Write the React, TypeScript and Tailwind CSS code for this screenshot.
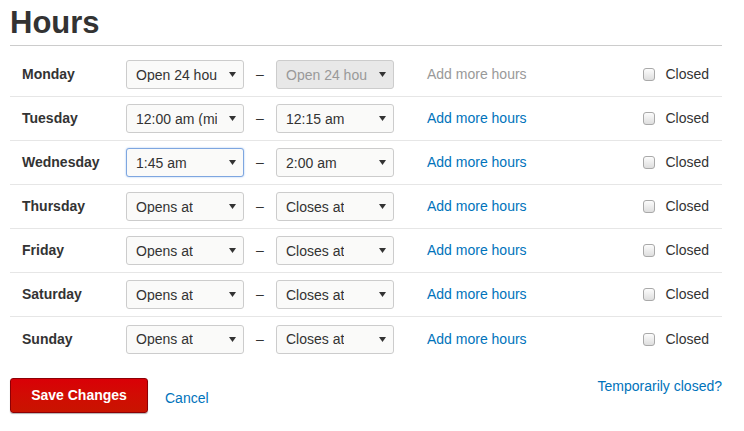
import React from 'react';

type Row = {
  day: string;
  open: string;
  close: string;
  disabledClose?: boolean;
  muted?: boolean;
  focused?: boolean;
};

const rows: Row[] = [
  { day: 'Monday', open: 'Open 24 hours', close: 'Open 24 hours', disabledClose: true, muted: true },
  { day: 'Tuesday', open: '12:00 am (midnight)', close: '12:15 am' },
  { day: 'Wednesday', open: '1:45 am', close: '2:00 am', focused: true },
  { day: 'Thursday', open: 'Opens at', close: 'Closes at' },
  { day: 'Friday', open: 'Opens at', close: 'Closes at' },
  { day: 'Saturday', open: 'Opens at', close: 'Closes at' },
  { day: 'Sunday', open: 'Opens at', close: 'Closes at' },
];

function FakeSelect({ value, disabled, focused }: { value: string; disabled?: boolean; focused?: boolean }) {
  const border = focused ? 'border-[#7ea6e0] shadow-[0_0_2px_#9ec0f0]' : 'border-[#cccccc]';
  const bg = disabled ? 'bg-[#e8e8e8]' : 'bg-[#fafaf9]';
  return (
    <div
      className={`relative w-[118px] h-[29px] rounded-[3px] border ${border} ${bg} flex items-center pl-[9px] pr-[26px]`}
    >
      <span className={`block overflow-hidden whitespace-nowrap text-[14px] leading-none ${disabled ? 'text-[#999]' : 'text-[#333]'}`}>
        {value}
      </span>
      <svg className="absolute right-[7px] top-[11px]" width="7" height="5" viewBox="0 0 7 5">
        <path d="M0 0 L7 0 L3.5 5 Z" fill="#333" />
      </svg>
    </div>
  );
}

function Checkbox() {
  return (
    <span className="inline-block w-[12px] h-[13px] rounded-[3px] border border-[#a9a9a9] bg-gradient-to-b from-[#fcfcfc] to-[#dedede]" />
  );
}

export default function App() {
  return (
    <div className="w-[744px] h-[431px] bg-white px-[10px] pt-[4px] text-[#333]" style={{ fontFamily: '"Liberation Sans", Arial, sans-serif' }}>
      <h1 className="text-[31px] font-bold leading-[38px] pb-[3px] border-b border-[#cccccc] w-[712px]">Hours</h1>

      <div className="mt-[7px] w-[712px]">
        {rows.map((r, i) => (
          <div
            key={r.day}
            className={`flex items-center h-[44px] ${i < rows.length - 1 ? 'border-b border-[#e6e6e6]' : ''}`}
          >
            <div className="w-[116px] shrink-0 pl-[12px] text-[14px] font-bold">{r.day}</div>
            <FakeSelect value={r.open} focused={r.focused} />
            <div className="w-[32px] text-center text-[14px]">–</div>
            <FakeSelect value={r.close} disabled={r.disabledClose} />
            <div className={`ml-[33px] text-[14px] ${r.muted ? 'text-[#999]' : 'text-[#0073bb]'}`}>Add more hours</div>
            <div className="ml-auto flex items-center pr-[13px]">
              <Checkbox />
              <span className="ml-[10px] text-[14px]">Closed</span>
            </div>
          </div>
        ))}
      </div>

      <div className="mt-[17px] w-[712px] flex items-start justify-between">
        <div className="flex items-center">
          <button className="w-[138px] h-[35px] rounded-[3px] border border-[#8d0005] bg-gradient-to-b from-[#d90007] to-[#c91400] text-white text-[14px] font-bold shadow-[0_1px_1px_rgba(0,0,0,0.3)]">
            Save Changes
          </button>
          <a className="ml-[17px] mt-[5px] text-[14px] text-[#0073bb]">Cancel</a>
        </div>
        <a className="-mt-[2px] text-[14px] text-[#0073bb]">Temporarily closed?</a>
      </div>
    </div>
  );
}
